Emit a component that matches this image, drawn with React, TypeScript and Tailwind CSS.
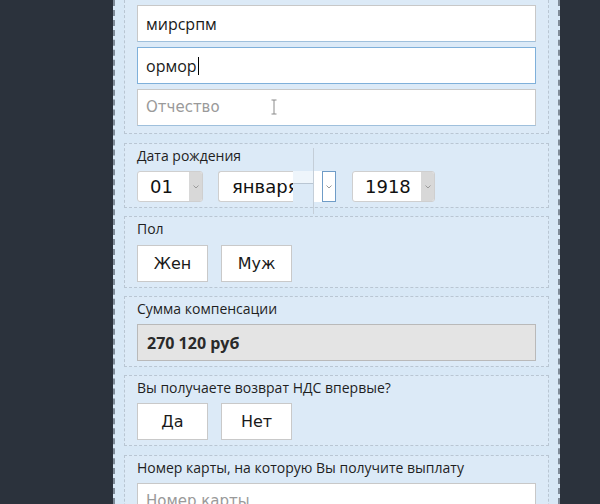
import React from "react";

const label = "font-['Open_Sans','Noto_Sans',sans-serif] font-medium text-[14px] leading-[20px] text-[#1f1f1f]";
const verdana = "font-['DejaVu_Sans',sans-serif]";

function Section({ children, className = "" }: { children: React.ReactNode; className?: string }) {
  return (
    <div className={`relative border border-dashed border-[#b9c6d3] bg-[#dceaf7] px-[12px] pt-[2px] pb-[5px] mb-[8px] ${className}`}>
      {children}
    </div>
  );
}

function Chevron() {
  return (
    <svg width="8" height="6" viewBox="0 0 8 6">
      <path d="M1.5 1.5 L4 4 L6.5 1.5" fill="none" stroke="#9a9a9a" strokeWidth="1" />
    </svg>
  );
}

function Select({ value, width }: { value: string; width: string }) {
  return (
    <div className={`flex h-[31px] ${width} rounded-[3px] border border-[#cfcfcf] bg-white overflow-hidden`}>
      <div className={`flex-1 pl-[12px] text-[18px] leading-[29px] text-[#111] ${verdana}`}>{value}</div>
      <div className="flex w-[13px] items-center justify-center bg-[#d8d8d8]">
        <Chevron />
      </div>
    </div>
  );
}

function ToggleButton({ text }: { text: string }) {
  return (
    <div className={`flex h-[37px] w-[71px] items-center justify-center border border-[#c9c9c9] bg-white text-[16px] text-[#1a1a1a] ${verdana}`}>
      {text}
    </div>
  );
}

export default function App() {
  return (
    <div className="h-[504px] w-[600px] overflow-hidden bg-[#2b323c]">
      <div className="ml-[113px] h-full w-[447px] border-x-2 border-dashed border-[#7f8b98] bg-[#d8e8f6] px-[9px]">
        {/* ФИО */}
        <Section className="border-t-0 pt-[5px] pb-[7px] mb-[9px]">
          <div className="flex flex-col gap-[5px]">
            <div className="flex h-[37px] items-center border border-[#c8c8c8] border-b-[#9fc0dc] bg-white pl-[8px] font-['Open_Sans',sans-serif] font-medium text-[16px] text-[#1a1a1a]">
              мирсрпм
            </div>
            <div className="flex h-[37px] items-center border border-[#7fb0da] bg-white pl-[8px] font-['Open_Sans',sans-serif] font-medium text-[16px] text-[#1a1a1a]">
              ормор<span className="ml-[1px] inline-block h-[18px] w-[1px] bg-black" />
            </div>
            <div className={`relative flex h-[37px] items-center border border-[#c8c8c8] border-b-[#9fc0dc] bg-white pl-[8px] text-[15px] text-[#9a9a9a] ${verdana}`}>
              Отчество
              <svg className="absolute left-[133px] top-[9px]" width="6" height="16" viewBox="0 0 6 16">
                <path d="M0.5 1 H5.5 M3 1 V15 M0.5 15 H5.5" stroke="#8a8a8a" strokeWidth="1" fill="none" />
              </svg>
            </div>
          </div>
        </Section>

        {/* Дата рождения */}
        <Section>
          <div className={label}>Дата рождения</div>
          <div className="mt-[5px] flex h-[31px] items-start">
            <Select value="01" width="w-[66px]" />
            <div className="ml-[15px] flex h-[31px]">
              <div className={`w-[75px] overflow-hidden whitespace-nowrap rounded-l-[3px] border border-r-0 border-[#cfcfcf] bg-white pl-[13px] text-[18px] leading-[29px] text-[#111] ${verdana}`}>
                января
              </div>
              <div className="relative w-[20px]">
                <div className="h-[12px] bg-[#eef5fb]" />
                <div className="h-[1px] bg-[#b9c6d3]" />
              </div>
              <div className="w-[9px] bg-white" />
              <div className="flex w-[14px] items-center justify-center border border-[#6f9cc7] bg-white">
                <Chevron />
              </div>
            </div>
            <div className="ml-[16px]">
              <Select value="1918" width="w-[83px]" />
            </div>
          </div>
          <div className="absolute left-[188px] top-[4px] h-[66px] w-[1px] bg-[#c4ced8]" />
        </Section>

        {/* Пол */}
        <Section>
          <div className={label}>Пол</div>
          <div className="mt-[6px] flex gap-[13px]">
            <ToggleButton text="Жен" />
            <ToggleButton text="Муж" />
          </div>
        </Section>

        {/* Сумма */}
        <Section>
          <div className={label}>Сумма компенсации</div>
          <div className="mt-[5px] flex h-[37px] items-center border border-[#b9b9b9] bg-[#e4e4e4] pl-[9px] font-['Open_Sans',sans-serif] text-[16px] font-bold text-[#2a2a2a]">
            270 120 руб
          </div>
        </Section>

        {/* НДС */}
        <Section className="mb-[9px]">
          <div className={label}>Вы получаете возврат НДС впервые?</div>
          <div className="mt-[5px] flex gap-[13px]">
            <ToggleButton text="Да" />
            <ToggleButton text="Нет" />
          </div>
        </Section>

        {/* Карта */}
        <Section>
          <div className={label}>Номер карты, на которую Вы получите выплату</div>
          <div className={`mt-[5px] flex h-[37px] items-center border border-[#c8c8c8] bg-white pl-[8px] text-[15px] text-[#9a9a9a] ${verdana}`}>
            Номер карты
          </div>
        </Section>
      </div>
    </div>
  );
}
